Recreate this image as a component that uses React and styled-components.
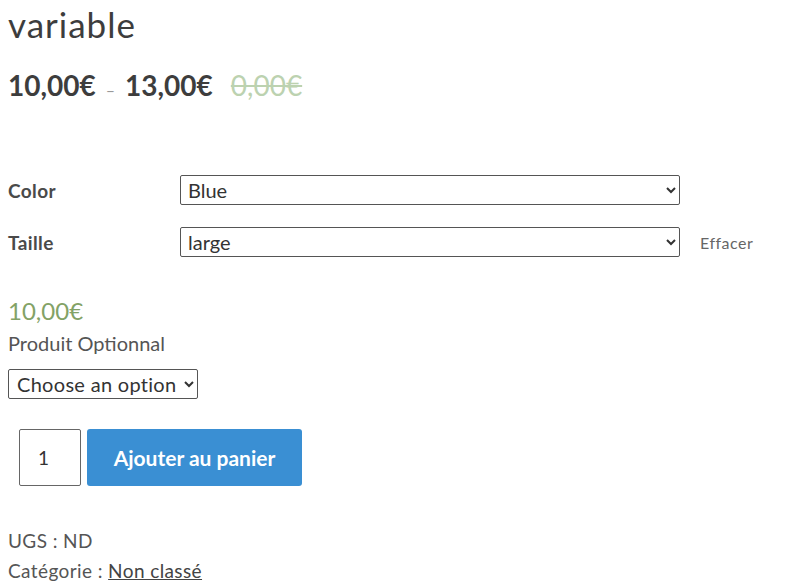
import styled, { createGlobalStyle } from 'styled-components'

const Global = createGlobalStyle`
    body {
        margin: 0;
        background: #fff;
        font-family: "Lato", "Noto Sans", sans-serif;
        color: #4a4a4a;
    }
`

const Page = styled.div`
    padding: 0 8px;
`

const Title = styled.h1`
    font-size: 35px;
    font-weight: 400;
    color: #3d3d3d;
    margin: 4px 0 0;
    line-height: 40px;
    letter-spacing: 1px;
`

const Price = styled.p`
    display: flex;
    align-items: baseline;
    gap: 10px;
    margin: 24px 0 0;
    font-size: 28px;
    font-weight: 700;
    color: #3d3d3d;
    line-height: 34px;

    .dash {
        font-size: 16px;
        font-weight: 400;
        color: #999;
    }
    del {
        margin-left: 8px;
        font-weight: 400;
        color: #bcd2b0;
    }
`

const Variations = styled.div`
    display: grid;
    grid-template-columns: 172px 500px auto;
    align-items: center;
    row-gap: 22px;
    margin-top: 68px;

    label {
        font-size: 19px;
        font-weight: 700;
        letter-spacing: 0.4px;
        color: #4a4a4a;
    }
`

const Select = styled.select`
    height: 30px;
    font-family: inherit;
    font-size: 20px;
    color: #333;
    border: 1px solid #555;
    border-radius: 2px;
    background: #fff;
    padding: 0 3px;
    width: ${p => (p.$full ? '100%' : 'auto')};
`

const Reset = styled.a`
    margin-left: 20px;
    font-size: 16px;
    letter-spacing: 0.5px;
    color: #666;
`

const Single = styled.div`
    margin-top: 40px;
    font-size: 24px;
    font-weight: 400;
    color: #83a266;
    line-height: 28px;
`

const Addon = styled.div`
    margin-top: 6px;
    font-size: 20px;
    color: #555;
    line-height: 24px;
`

const AddonSelect = styled(Select)`
    margin-top: 14px;
    height: 30px;
    padding: 0 4px;
    letter-spacing: 0.3px;
`

const Cart = styled.div`
    display: flex;
    gap: 6px;
    margin: 30px 0 0 11px;
`

const Qty = styled.input`
    width: 62px;
    height: 57px;
    box-sizing: border-box;
    border: 1px solid #666;
    border-radius: 2px;
    font-family: inherit;
    font-size: 19px;
    padding: 0 0 0 18px;
    color: #333;
`

const Button = styled.button`
    width: 215px;
    height: 57px;
    border: none;
    border-radius: 3px;
    background: #3a8fd3;
    color: #fff;
    font-family: inherit;
    font-size: 21px;
    font-weight: 700;
`

const Meta = styled.div`
    margin-top: 40px;
    font-size: 19px;
    color: #555;
    line-height: 30px;
    letter-spacing: 0.4px;

    a {
        color: #444;
    }
`

const App = () => {
    return (
        <Page>
            <Global />
            <Title>variable</Title>
            <Price>
                <span>10,00€</span>
                <span className="dash">–</span>
                <span>13,00€</span>
                <del>0,00€</del>
            </Price>
            <Variations>
                <label>Color</label>
                <Select $full defaultValue="blue">
                    <option value="blue">Blue</option>
                </Select>
                <span></span>
                <label>Taille</label>
                <Select $full defaultValue="large">
                    <option value="large">large</option>
                </Select>
                <Reset>Effacer</Reset>
            </Variations>
            <Single>10,00€</Single>
            <Addon>Produit Optionnal</Addon>
            <AddonSelect>
                <option>Choose an option</option>
            </AddonSelect>
            <Cart>
                <Qty defaultValue="1" />
                <Button>Ajouter au panier</Button>
            </Cart>
            <Meta>
                <div>UGS : ND</div>
                <div>Catégorie : <a href="#">Non classé</a></div>
            </Meta>
        </Page>
    )
}

export default App
